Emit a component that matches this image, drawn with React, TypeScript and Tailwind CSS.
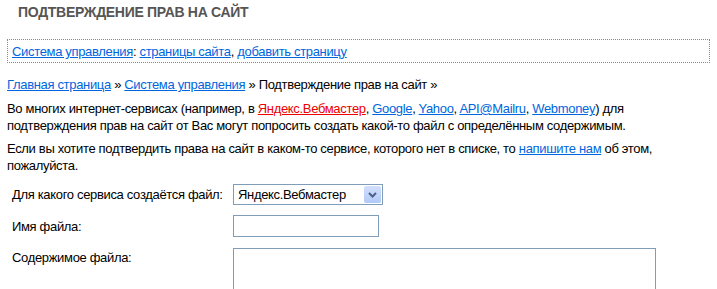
import React from "react";

const A = ({ children, red }: { children: React.ReactNode; red?: boolean }) => (
  <a href="#" className={red ? "text-[#ee0000] underline" : "text-[#0066dd] underline"}>
    {children}
  </a>
);

export default function App() {
  return (
    <div className="w-[717px] h-[289px] overflow-hidden bg-white pl-[7px] pr-[7px] font-['Liberation_Sans',Arial,sans-serif] text-[13px] leading-[17px] tracking-[-0.33px] text-black">
      <h1 className="pl-[11px] pt-[4px] text-[14px] leading-[17px] font-bold tracking-[-0.3px] text-[#555555]">
        ПОДТВЕРЖДЕНИЕ ПРАВ НА САЙТ
      </h1>
      <div className="mt-[18px] w-[703px] border border-dotted border-[#888888] pl-[4px] pt-[3px] pb-[2px]">
        <A>Система управления</A>: <A>страницы сайта</A>, <A>добавить страницу</A>
      </div>
      <div className="mt-[13px]">
        <A>Главная страница</A> » <A>Система управления</A> » Подтверждение прав на сайт »
      </div>
      <p className="mt-[7px]">
        Во многих интернет-сервисах (например, в <A red>Яндекс.Вебмастер</A>, <A>Google</A>,{" "}
        <A>Yahoo</A>, <A>API@Mailru</A>, <A>Webmoney</A>) для
        <br />
        подтверждения прав на сайт от Вас могут попросить создать какой-то файл с определённым содержимым.
      </p>
      <p className="mt-[6px]">
        Если вы хотите подтвердить права на сайт в каком-то сервисе, которого нет в списке, то{" "}
        <A>напишите нам</A> об этом,
        <br />
        пожалуйста.
      </p>
      <div className="mt-[10px] grid grid-cols-[226px_1fr] items-center">
        <div className="pl-[5px] whitespace-nowrap">Для какого сервиса создаётся файл:</div>
        <div className="flex h-[21px] w-[150px] items-center border border-[#7f9db9] bg-white pl-[4px] pr-[1px]">
          <span className="flex-1 whitespace-nowrap">Яндекс.Вебмастер</span>
          <span className="flex h-[17px] w-[17px] items-center justify-center rounded-[2px] bg-gradient-to-b from-[#d2e0fd] to-[#b2c9f7]">
            <svg width="9" height="6" viewBox="0 0 9 6">
              <path d="M1 1 L4.5 4.5 L8 1" fill="none" stroke="#4d6185" strokeWidth="2" />
            </svg>
          </span>
        </div>
      </div>
      <div className="mt-[10px] grid grid-cols-[226px_1fr] items-center">
        <div className="pl-[5px]">Имя файла:</div>
        <div className="h-[22px] w-[146px] border border-[#7f9db9] bg-white" />
      </div>
      <div className="mt-[11px] grid grid-cols-[226px_1fr] items-start">
        <div className="pl-[5px] pt-[1px]">Содержимое файла:</div>
        <div className="h-[100px] w-[423px] border border-[#7f9db9] bg-white" />
      </div>
    </div>
  );
}
